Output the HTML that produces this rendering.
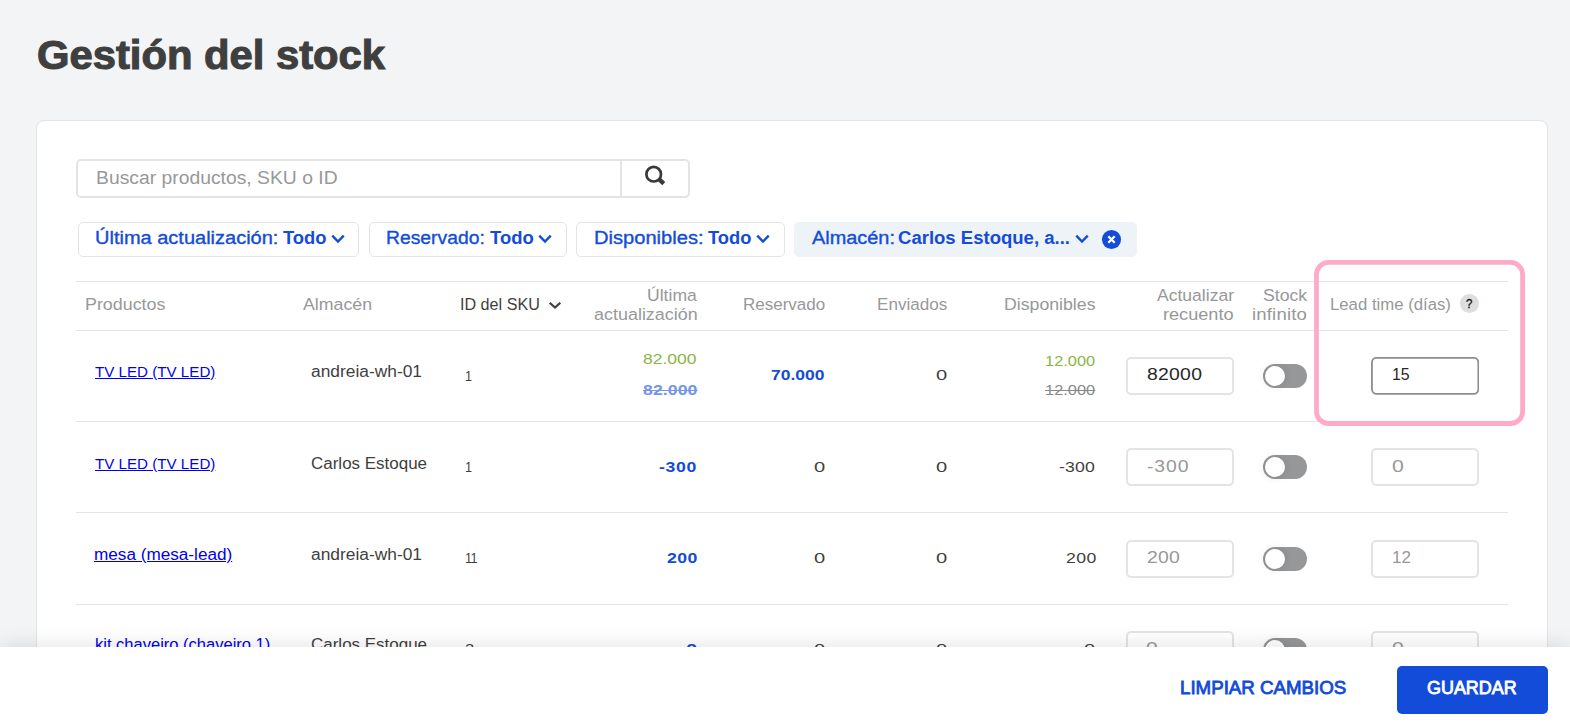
<!DOCTYPE html>
<html lang="es">
<head>
<meta charset="utf-8">
<title>Gestión del stock</title>
<style>
*{box-sizing:border-box;margin:0;padding:0}
html,body{width:1570px;height:727px;overflow:hidden}
body{background:#f2f4f5;font-family:"Liberation Sans",sans-serif;color:#3f3f40;position:relative}
.t{position:absolute;white-space:nowrap;line-height:20px;font-weight:400;transform-origin:0 50%}
.card{position:absolute;left:36px;top:120px;width:1512px;height:700px;background:#fff;border:1px solid #e3e4e6;border-radius:8px}
.search{position:absolute;left:76px;top:159px;width:614px;height:39px;border:2px solid #e3e4e6;border-radius:5px;background:#fff}
.search i{position:absolute;left:542px;top:0;width:2px;height:35px;background:#e3e4e6}
.search svg{position:absolute;left:545px;top:0}
.pill{position:absolute;top:222px;height:35px;border:1px solid #e3e4e6;border-radius:5px;background:#fff}
.pill.on{background:#eef3f8;border-color:#eef3f8}
.chev{position:absolute}
.hl{position:absolute;left:76px;width:1432px;height:1px;background:#e3e4e6}
.inp{position:absolute;width:108px;height:38px;border:2px solid #e3e4e6;border-radius:5px;background:#fff}
.inp.act{border:1.5px solid #8c8c8d;left:1371px;width:108px}
.tog{position:absolute;left:1263px;width:44px;height:24px;border-radius:12px;background:#969799}
.tog i{position:absolute;left:2px;top:2px;width:20px;height:20px;border-radius:50%;background:#fff;box-shadow:0 0 9px rgba(0,0,0,.12)}
.q{position:absolute;left:1460px;top:294px;width:19px;height:19px;border-radius:50%;background:#dedede}
.footer{position:absolute;left:0;top:647px;width:1570px;height:80px;background:#fff;box-shadow:0 -2px 20px rgba(0,0,0,.11)}
.save{position:absolute;left:1397px;top:666px;width:151px;height:48px;background:#134cd8;border-radius:5px}
.pink{position:absolute;left:1310px;top:256px}
</style>
</head>
<body>
<div class="card"></div>

<div class="search"><i></i>
<svg width="65" height="35" viewBox="623 161 65 35"><circle cx="653.7" cy="174.2" r="7.3" fill="none" stroke="#39393a" stroke-width="2.7"/><path d="M658.9 179.2 L663.8 183.6" stroke="#39393a" stroke-width="4.3" stroke-linecap="butt"/></svg></div>

<div class="pill" style="left:78px;width:281px"></div>
<div class="pill" style="left:369px;width:198px"></div>
<div class="pill" style="left:576px;width:209px"></div>
<div class="pill on" style="left:794px;width:343px"></div>

<svg class="chev" style="left:328.85px;top:232px" width="18" height="14" viewBox="0 0 18 14"><path d="M3.25 3.7 L9 9.5 L14.75 3.7" fill="none" stroke="#134cd8" stroke-width="2.4"/></svg>
<svg class="chev" style="left:536.15px;top:232px" width="18" height="14" viewBox="0 0 18 14"><path d="M3.25 3.7 L9 9.5 L14.75 3.7" fill="none" stroke="#134cd8" stroke-width="2.4"/></svg>
<svg class="chev" style="left:753.85px;top:232px" width="18" height="14" viewBox="0 0 18 14"><path d="M3.25 3.7 L9 9.5 L14.75 3.7" fill="none" stroke="#134cd8" stroke-width="2.4"/></svg>
<svg class="chev" style="left:1072.90px;top:232px" width="18" height="14" viewBox="0 0 18 14"><path d="M3.25 3.7 L9 9.5 L14.75 3.7" fill="none" stroke="#134cd8" stroke-width="2.4"/></svg>
<svg class="chev" style="left:1101px;top:229px" width="21" height="21" viewBox="0 0 21 21"><circle cx="10.5" cy="10.5" r="9.55" fill="#134cd8"/><path d="M7.3 7.3 L13.7 13.7 M13.7 7.3 L7.3 13.7" stroke="#fff" stroke-width="2.3"/></svg>
<svg class="chev" style="left:546.05px;top:298px" width="18" height="14" viewBox="0 0 18 14"><path d="M3.65 4.7 L9 9.5 L14.35 4.7" fill="none" stroke="#3f3f40" stroke-width="2.2"/></svg>
<div class="hl" style="top:281px"></div>
<div class="hl" style="top:330px"></div>
<div class="hl" style="top:421px"></div>
<div class="hl" style="top:512px"></div>
<div class="hl" style="top:604px"></div>
<div class="q"></div>

<div class="inp" style="left:1126px;top:357px"></div><div class="tog" style="top:364px"><i></i></div><svg class="chev" style="left:1371px;top:357px" width="108" height="38" viewBox="0 0 108 38"><rect x="0.95" y="0.85" width="106.4" height="36.1" rx="4.6" fill="#fff" stroke="#8e8e8f" stroke-width="1.8"/></svg>
<div class="inp" style="left:1126px;top:448px"></div><div class="tog" style="top:455px"><i></i></div><div class="inp" style="left:1371px;top:448px"></div>
<div class="inp" style="left:1126px;top:539.5px"></div><div class="tog" style="top:546.5px"><i></i></div><div class="inp" style="left:1371px;top:539.5px"></div>
<div class="inp" style="left:1126px;top:631px"></div><div class="tog" style="top:638px"><i></i></div><div class="inp" style="left:1371px;top:631px"></div>

<h1 class="t" style="left:36.9px;top:45px;font-size:40.5px;font-weight:700;color:#3f3f40;transform:scaleX(1.031);-webkit-text-stroke:1.1px #3f3f40;">Gestión del stock</h1>
<span class="t" style="left:96.0px;top:168px;font-size:19.2px;color:#979899;transform:scaleX(1.007);">Buscar productos, SKU o ID</span>
<span class="t" style="left:94.8px;top:228px;font-size:18px;color:#134cd8;transform:scaleX(1.111);-webkit-text-stroke:0.35px;">Última actualización:</span>
<span class="t" style="left:282.9px;top:228px;font-size:17.6px;font-weight:700;color:#134cd8;transform:scaleX(1.044);">Todo</span>
<span class="t" style="left:386.4px;top:228px;font-size:18px;color:#134cd8;transform:scaleX(1.073);-webkit-text-stroke:0.35px;">Reservado:</span>
<span class="t" style="left:490.0px;top:228px;font-size:17.6px;font-weight:700;color:#134cd8;transform:scaleX(1.049);">Todo</span>
<span class="t" style="left:593.7px;top:228px;font-size:18px;color:#134cd8;transform:scaleX(1.117);-webkit-text-stroke:0.35px;">Disponibles:</span>
<span class="t" style="left:708.0px;top:228px;font-size:17.6px;font-weight:700;color:#134cd8;transform:scaleX(1.041);">Todo</span>
<span class="t" style="left:812.1px;top:228px;font-size:18px;color:#134cd8;transform:scaleX(1.105);-webkit-text-stroke:0.35px;">Almacén:</span>
<span class="t" style="left:898.1px;top:228px;font-size:17.6px;font-weight:700;color:#134cd8;transform:scaleX(1.053);">Carlos Estoque, a...</span>
<span class="t" style="left:85.1px;top:294px;font-size:16.3px;color:#979899;transform:scaleX(1.097);">Productos</span>
<span class="t" style="left:302.7px;top:294px;font-size:16.3px;color:#979899;transform:scaleX(1.090);">Almacén</span>
<span class="t" style="left:460.0px;top:294px;font-size:16.3px;color:#3f3f40;transform:scaleX(0.991);">ID del SKU</span>
<span class="t" style="left:646.9px;top:285px;font-size:16.3px;color:#979899;transform:scaleX(1.080);">Última</span>
<span class="t" style="left:594.1px;top:304px;font-size:16.3px;color:#979899;transform:scaleX(1.102);">actualización</span>
<span class="t" style="left:742.5px;top:294px;font-size:16.3px;color:#979899;transform:scaleX(1.043);">Reservado</span>
<span class="t" style="left:876.9px;top:294px;font-size:16.3px;color:#979899;transform:scaleX(1.051);">Enviados</span>
<span class="t" style="left:1003.8px;top:294px;font-size:16.3px;color:#979899;transform:scaleX(1.087);">Disponibles</span>
<span class="t" style="left:1156.9px;top:285px;font-size:16.3px;color:#979899;transform:scaleX(1.077);">Actualizar</span>
<span class="t" style="left:1163.3px;top:304px;font-size:16.3px;color:#979899;transform:scaleX(1.113);">recuento</span>
<span class="t" style="left:1262.5px;top:285px;font-size:16.3px;color:#979899;transform:scaleX(1.085);">Stock</span>
<span class="t" style="left:1252.3px;top:304px;font-size:16.3px;color:#979899;letter-spacing:0.15px;transform:scaleX(1.140);">infinito</span>
<span class="t" style="left:1330.0px;top:294px;font-size:16.3px;color:#979899;transform:scaleX(1.028);">Lead time (días)</span>
<span class="t" style="left:1465.9px;top:294px;font-size:12.5px;color:#111;transform:scaleX(0.917);-webkit-text-stroke:0.3px;">?</span>
<a href="#" class="t" style="left:95.3px;top:362px;font-size:15px;color:#0000ee;transform:scaleX(1.010);text-decoration:underline;">TV LED (TV LED)</a>
<span class="t" style="left:311.4px;top:362px;font-size:16px;color:#3f3f40;transform:scaleX(1.085);">andreia-wh-01</span>
<span class="t" style="left:464.7px;top:366px;font-size:14.4px;color:#3f3f40;transform:scaleX(0.880);">1</span>
<span class="t" style="left:643.2px;top:349px;font-size:15.5px;color:#88b644;transform:scaleX(1.128);">82.000</span>
<span class="t" style="left:642.5px;top:380px;font-size:15.5px;font-weight:700;color:#7495e8;letter-spacing:0.06px;transform:scaleX(1.140);text-decoration:line-through;">82.000</span>
<span class="t" style="left:770.7px;top:365px;font-size:15.5px;font-weight:700;color:#134cd8;transform:scaleX(1.126);">70.000</span>
<span class="t" style="left:936.0px;top:365px;font-size:15.5px;color:#3f3f40;transform:scaleX(1.300);">0</span>
<span class="t" style="left:1045.2px;top:351px;font-size:15.5px;color:#88b644;transform:scaleX(1.059);">12.000</span>
<span class="t" style="left:1045.2px;top:380px;font-size:15.5px;color:#8a8a8b;transform:scaleX(1.059);text-decoration:line-through;">12.000</span>
<span class="t" style="left:1146.5px;top:365px;font-size:17px;color:#25282a;letter-spacing:0.23px;transform:scaleX(1.140);">82000</span>
<span class="t" style="left:1391.6px;top:365px;font-size:17px;color:#25282a;transform:scaleX(0.935);">15</span>
<a href="#" class="t" style="left:95.3px;top:454px;font-size:15px;color:#0000ee;transform:scaleX(1.010);text-decoration:underline;">TV LED (TV LED)</a>
<span class="t" style="left:311.4px;top:454px;font-size:16px;color:#3f3f40;transform:scaleX(1.061);">Carlos Estoque</span>
<span class="t" style="left:464.7px;top:457px;font-size:14.4px;color:#3f3f40;transform:scaleX(0.880);">1</span>
<span class="t" style="left:659.1px;top:457px;font-size:15.5px;font-weight:700;color:#134cd8;letter-spacing:0.61px;transform:scaleX(1.140);">-300</span>
<span class="t" style="left:813.5px;top:457px;font-size:15.5px;color:#3f3f40;transform:scaleX(1.300);">0</span>
<span class="t" style="left:936.0px;top:457px;font-size:15.5px;color:#3f3f40;transform:scaleX(1.300);">0</span>
<span class="t" style="left:1059.3px;top:457px;font-size:15.5px;color:#3f3f40;letter-spacing:0.12px;transform:scaleX(1.140);">-300</span>
<span class="t" style="left:1146.9px;top:457px;font-size:17px;color:#979899;letter-spacing:0.77px;transform:scaleX(1.140);">-300</span>
<span class="t" style="left:1391.8px;top:457px;font-size:17px;color:#979899;transform:scaleX(1.250);">0</span>
<a href="#" class="t" style="left:94.3px;top:545px;font-size:16px;color:#0000ee;transform:scaleX(1.072);text-decoration:underline;">mesa (mesa-lead)</a>
<span class="t" style="left:311.4px;top:545px;font-size:16px;color:#3f3f40;transform:scaleX(1.085);">andreia-wh-01</span>
<span class="t" style="left:464.7px;top:548px;font-size:14.4px;color:#3f3f40;letter-spacing:-0.61px;transform:scaleX(0.880);">11</span>
<span class="t" style="left:666.7px;top:548px;font-size:15.5px;font-weight:700;color:#134cd8;letter-spacing:0.41px;transform:scaleX(1.140);">200</span>
<span class="t" style="left:813.5px;top:548px;font-size:15.5px;color:#3f3f40;transform:scaleX(1.300);">0</span>
<span class="t" style="left:936.0px;top:548px;font-size:15.5px;color:#3f3f40;transform:scaleX(1.300);">0</span>
<span class="t" style="left:1065.7px;top:548px;font-size:15.5px;color:#3f3f40;letter-spacing:0.37px;transform:scaleX(1.140);">200</span>
<span class="t" style="left:1146.5px;top:548px;font-size:17px;color:#979899;letter-spacing:0.23px;transform:scaleX(1.140);">200</span>
<span class="t" style="left:1392.0px;top:548px;font-size:17px;color:#979899;">12</span>
<a href="#" class="t" style="left:95.2px;top:635px;font-size:16px;color:#0000ee;transform:scaleX(1.032);text-decoration:underline;">kit chaveiro (chaveiro 1)</a>
<span class="t" style="left:311.4px;top:635px;font-size:16px;color:#3f3f40;transform:scaleX(1.061);">Carlos Estoque</span>
<span class="t" style="left:464.5px;top:639px;font-size:14.4px;color:#3f3f40;transform:scaleX(1.150);">3</span>
<span class="t" style="left:685.7px;top:639px;font-size:15.5px;font-weight:700;color:#134cd8;transform:scaleX(1.300);">0</span>
<span class="t" style="left:813.5px;top:639px;font-size:15.5px;color:#3f3f40;transform:scaleX(1.300);">0</span>
<span class="t" style="left:936.0px;top:639px;font-size:15.5px;color:#3f3f40;transform:scaleX(1.300);">0</span>
<span class="t" style="left:1084.3px;top:639px;font-size:15.5px;color:#3f3f40;transform:scaleX(1.300);">0</span>
<span class="t" style="left:1146.4px;top:639px;font-size:17px;color:#979899;transform:scaleX(1.238);">0</span>
<span class="t" style="left:1391.8px;top:639px;font-size:17px;color:#979899;transform:scaleX(1.250);">0</span>

<div class="footer"></div>
<div class="save"></div>
<span class="t" style="left:1180.1px;top:678px;font-size:17.5px;color:#134cd8;transform:scaleX(1.069);-webkit-text-stroke:0.8px;">LIMPIAR CAMBIOS</span>
<span class="t" style="left:1427.3px;top:678px;font-size:17.5px;color:#ffffff;transform:scaleX(1.025);-webkit-text-stroke:0.8px;">GUARDAR</span>
<svg class="pink" width="220" height="175" viewBox="1310 256 220 175"><rect x="1316.5" y="262.4" width="206.1" height="161.1" rx="12.1" ry="12.1" fill="none" stroke="#ffaac8" stroke-width="4.8"/></svg>
</body>
</html>
